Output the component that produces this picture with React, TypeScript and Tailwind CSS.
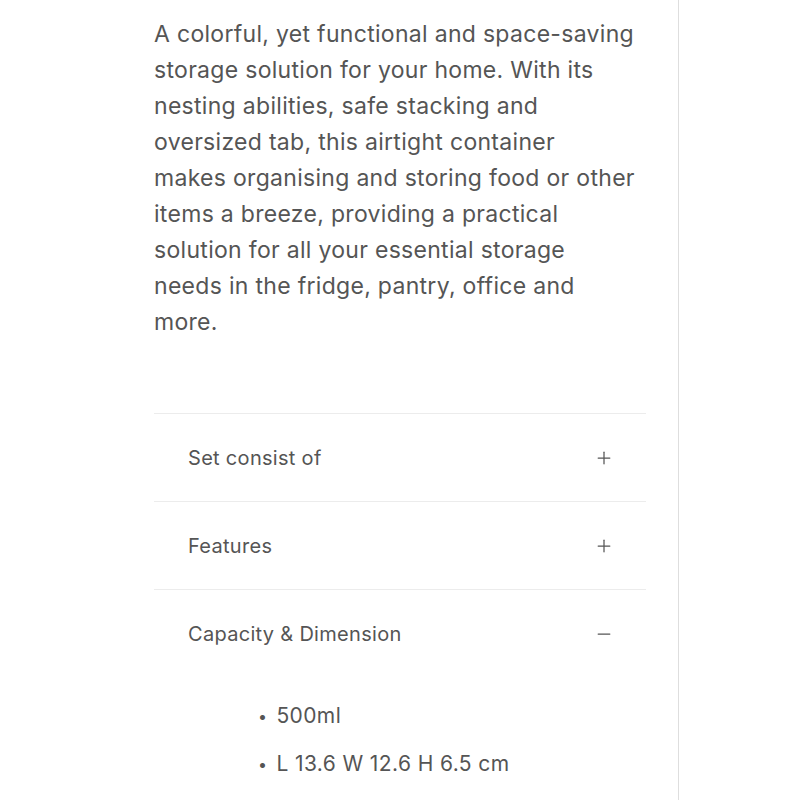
import { Plus, Minus } from "lucide-react";

const INTRO = [
	"A colorful, yet functional and space-saving",
	"storage solution for your home. With its",
	"nesting abilities, safe stacking and",
	"oversized tab, this airtight container",
	"makes organising and storing food or other",
	"items a breeze, providing a practical",
	"solution for all your essential storage",
	"needs in the fridge, pantry, office and",
	"more.",
];

const SECTIONS = [
	{ title: "Set consist of", open: false },
	{ title: "Features", open: false },
	{ title: "Capacity & Dimension", open: true },
];

const DETAILS = ["500ml", "L 13.6 W 12.6 H 6.5 cm"];

export default function App() {
	return (
		<div className="h-[800px] overflow-hidden bg-white font-['Inter',sans-serif] text-[#555555]">
			<div className="h-full w-[679px] border-r border-[#dedede] pl-[154px]">
				<div className="w-[492px]">
					<p className="pt-4 text-[23px] leading-[36px] tracking-[0.3px] whitespace-nowrap">
						{INTRO.map((line) => (
							<span key={line} className="block">
								{line}
							</span>
						))}
					</p>

					<div className="mt-[73px] border-t border-[#ececec]">
						{SECTIONS.map((s) => (
							<div key={s.title}>
								<div
									className={
										s.open
											? "flex h-[88px] items-center justify-between pl-[34px] pr-[32px]"
											: "flex h-[88px] items-center justify-between border-b border-[#ececec] pl-[34px] pr-[32px]"
									}
								>
									<span className="text-[20px] tracking-[0.3px]">{s.title}</span>
									{s.open ? (
										<Minus size={20} strokeWidth={1.5} />
									) : (
										<Plus size={20} strokeWidth={1.5} />
									)}
								</div>
								{s.open && (
									<ul className="pl-[104px] pt-[14px]">
										{DETAILS.map((d) => (
											<li
												key={d}
												className="flex h-[48px] items-center gap-[9px] text-[21px] tracking-[0.4px]"
											>
												<span className="text-[16px]">•</span>
												{d}
											</li>
										))}
									</ul>
								)}
							</div>
						))}
					</div>
				</div>
			</div>
		</div>
	);
}
